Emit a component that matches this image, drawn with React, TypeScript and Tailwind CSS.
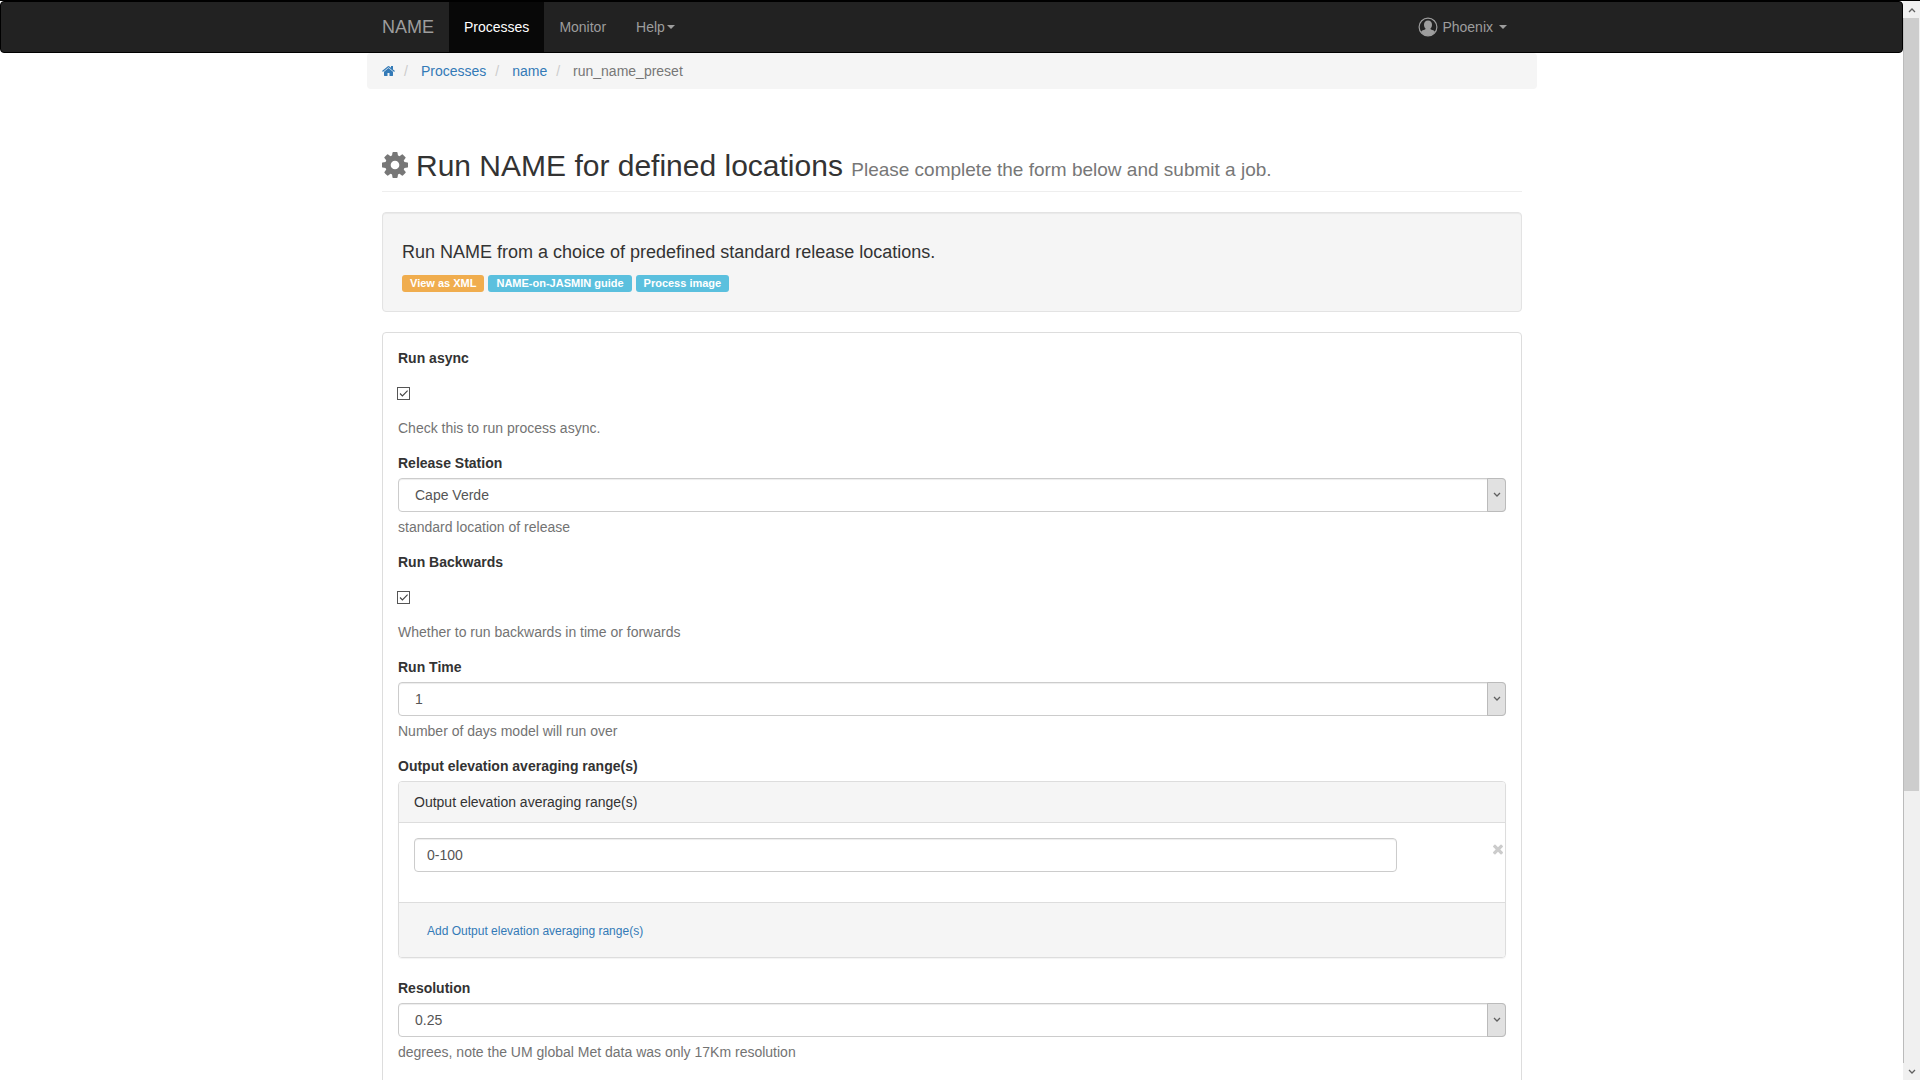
import { useState } from "react";
import type { ReactNode } from "react";

const COG =
  "M1152 896q0-106-75-181t-181-75-181 75-75 181 75 181 181 75 181-75 75-181zm512-109v222q0 12-8 23t-20 13l-185 28q-19 54-39 91 35 50 107 138 10 12 10 25t-9 23q-27 37-99 108t-94 71q-12 0-26-9l-138-108q-44 23-91 38-16 136-29 186-7 28-36 28h-222q-14 0-24.5-8.5t-11.5-21.5l-28-184q-49-16-90-37l-141 107q-10 9-25 9-14 0-25-11-126-114-165-168-7-10-7-23 0-12 8-23 15-21 51-66.5t54-70.5q-27-50-41-99l-183-27q-13-2-21-12.5t-8-23.5v-222q0-12 8-23t19-13l186-28q14-46 39-92-40-57-107-138-10-12-10-24 0-10 9-23 26-36 98.5-107.5t94.5-71.5q13 0 26 10l138 107q44-23 91-38 16-136 29-186 7-28 36-28h222q14 0 24.5 8.5t11.5 21.5l28 184q49 16 90 37l142-107q9-9 24-9 13 0 25 10 129 119 165 170 7 8 7 22 0 12-8 23-15 21-51 66.5t-54 70.5q26 50 41 98l183 28q13 2 21 12.5t8 23.5z";
const HOME =
  "M1472 992v480q0 26-19 45t-45 19h-384v-384h-256v384h-384q-26 0-45-19t-19-45v-480q0-1 .5-3t.5-3l575-474 575 474q1 2 1 6zm223-69l-62 74q-8 9-21 11h-3q-13 0-21-7l-692-577-692 577q-12 8-24 7-13-2-21-11l-62-74q-8-10-7-23.5t11-21.5l719-599q32-26 76-26t76 26l244 204v-195q0-14 9-23t23-9h192q14 0 23 9t9 23v408l219 182q10 8 11 21.5t-7 23.5z";
const TIMES =
  "M1490 1322q0 40-28 68l-136 136q-28 28-68 28t-68-28l-294-294-294 294q-28 28-68 28t-68-28l-136-136q-28-28-28-68t28-68l294-294-294-294q-28-28-28-68t28-68l136-136q28-28 68-28t68 28l294 294 294-294q28-28 68-28t68 28l136 136q28 28 28 68t-28 68l-294 294 294 294q28 28 28 68z";

function Caret() {
  return (
    <svg viewBox="0 0 8 4" className="h-1 w-2 fill-current" aria-hidden="true">
      <path d="M0 0h8L4 4z" />
    </svg>
  );
}

function Chevron({ up = false }: { up?: boolean }) {
  return (
    <svg viewBox="0 0 8 6" className="h-[6px] w-2 fill-none stroke-[#606060] stroke-[1.3]" aria-hidden="true">
      <path d={up ? "M1 5L4 2L7 5" : "M1 1L4 4L7 1"} />
    </svg>
  );
}

function Crumb({ children }: { children: ReactNode }) {
  return (
    <li className="flex">
      <span className="ml-[9px] mr-[13px] text-[#ccc]" aria-hidden="true">
        /
      </span>
      {children}
    </li>
  );
}

function Tag({ className, children }: { className: string; children: ReactNode }) {
  return (
    <a href="#" className={`rounded-[3px] px-2 text-[11px] leading-[17px] font-bold text-white ${className}`}>
      {children}
    </a>
  );
}

function CheckField({ id, label, help }: { id: string; label: string; help: string }) {
  const [on, setOn] = useState(true);
  return (
    <div className="mb-[15px]">
      <label htmlFor={id} className="block font-bold">
        {label}
      </label>
      <div className="-ml-px mt-[19px] mb-[18px] grid h-[13px] w-[13px]">
        <input
          id={id}
          type="checkbox"
          checked={on}
          onChange={() => setOn(!on)}
          className="peer col-start-1 row-start-1 h-[13px] w-[13px] appearance-none border border-[#555] bg-white"
        />
        <svg
          viewBox="0 0 13 13"
          className="pointer-events-none invisible col-start-1 row-start-1 h-[13px] w-[13px] fill-none stroke-[#444] stroke-[1.1] peer-checked:visible"
          aria-hidden="true"
        >
          <path d="M3 6.500L5.400 9L10.600 3.600" />
        </svg>
      </div>
      <p className="text-[#737373]">{help}</p>
    </div>
  );
}

function SelectField({ id, label, help, options }: { id: string; label: string; help: string; options: string[] }) {
  return (
    <div className="mb-[15px]">
      <label htmlFor={id} className="mb-[5px] block font-bold">
        {label}
      </label>
      <div className="relative">
        <select
          id={id}
          className="block h-[34px] w-full appearance-none rounded border border-[#ccc] bg-white pr-6 pl-4 text-[#555] shadow-[inset_0_1px_1px_rgba(0,0,0,0.075)]"
        >
          {options.map((o) => (
            <option key={o}>{o}</option>
          ))}
        </select>
        <span className="pointer-events-none absolute inset-y-0 right-0 flex w-[19px] items-center justify-center rounded-r border border-[#bbb] bg-[#e1e1e1]">
          <Chevron />
        </span>
      </div>
      <p className="mt-[5px] text-[#737373]">{help}</p>
    </div>
  );
}

function Navbar() {
  return (
    <nav className="rounded border border-black bg-[#222] pl-px text-[#9d9d9d]">
      <div className="mx-auto flex h-[50px] max-w-[1170px] items-stretch px-[15px]">
        <a href="#" className="flex items-center pr-[15px] text-lg">
          NAME
        </a>
        <a href="#" className="flex items-center bg-[#080808] px-[15px] text-white">
          Processes
        </a>
        <a href="#" className="flex items-center px-[15px]">
          Monitor
        </a>
        <button type="button" className="flex items-center gap-[2px] px-[15px]">
          Help
          <Caret />
        </button>
        <button type="button" className="ml-auto flex items-center px-[15px]">
          <svg viewBox="0 0 20 20" className="mr-1 h-5 w-5" aria-hidden="true">
            <circle cx="10" cy="10" r="8.9" className="fill-none stroke-current stroke-[1.2]" />
            <path
              className="fill-current"
              d="M10 3.600c2.600 0 4 1.700 4 4.100 0 1.600-.7 3.100-1.600 3.900 0 .5.1.8.6 1 1.700.5 3.200 1 3.900 2.200C15.400 17.300 13 18.800 10 18.800S4.600 17.300 3.100 14.800c.7-1.200 2.200-1.700 3.900-2.200.5-.2.600-.5.600-1C6.700 10.800 6 9.300 6 7.700c0-2.400 1.400-4.100 4-4.100z"
            />
          </svg>
          <span className="mr-[6px]">Phoenix</span>
          <Caret />
        </button>
      </div>
    </nav>
  );
}

function Scrollbar() {
  return (
    <div className="flex w-[17px] flex-none flex-col bg-[#f0f0f0]" aria-hidden="true">
      <div className="flex h-[17px] items-center justify-center">
        <Chevron up />
      </div>
      <div className="flex-1 border-l border-[#bbb] pr-px">
        <div className="h-[74%] bg-[#cdcdcd]" />
      </div>
      <div className="flex h-[17px] items-center justify-center">
        <Chevron />
      </div>
    </div>
  );
}

export default function App() {
  return (
    <div className="flex h-screen border-t border-black bg-white font-['Liberation_Sans',Arial,sans-serif] text-sm leading-5 text-[#333]">
      <div className="min-w-0 flex-1 overflow-hidden">
        <Navbar />
        <div className="pl-px">
          <div className="mx-auto max-w-[1170px]">
            <ol className="mb-[60px] flex rounded bg-[#f5f5f5] px-[15px] py-2 text-[#337ab7]">
              <li className="flex items-center">
                <a href="#" aria-label="Home">
                  <svg viewBox="64 128 1664 1536" className="h-3 w-[13px] fill-current" aria-hidden="true">
                    <path d={HOME} />
                  </svg>
                </a>
              </li>
              <Crumb>
                <a href="#">Processes</a>
              </Crumb>
              <Crumb>
                <a href="#">name</a>
              </Crumb>
              <Crumb>
                <span className="text-[#777]">run_name_preset</span>
              </Crumb>
            </ol>

            <main className="px-[15px]">
              <header className="mb-5 flex items-start border-b border-[#eee] pb-[9px]">
                <svg viewBox="128 128 1536 1536" className="mt-[3px] mr-2 h-[26px] w-[26px] fill-[#777]" aria-hidden="true">
                  <path d={COG} />
                </svg>
                <h2 className="text-[30px] leading-[33px]">
                  Run NAME for defined locations <small className="text-[19px] leading-5 text-[#777]">Please complete the form below and submit a job.</small>
                </h2>
              </header>

              <section className="mb-5 rounded border border-[#e3e3e3] bg-[#f5f5f5] p-[19px] shadow-[inset_0_1px_1px_rgba(0,0,0,0.05)]">
                <h4 className="my-[10px] text-lg leading-5">Run NAME from a choice of predefined standard release locations.</h4>
                <div className="flex h-5 items-end gap-1">
                  <Tag className="bg-[#f0ad4e]">View as XML</Tag>
                  <Tag className="bg-[#5bc0de]">NAME-on-JASMIN guide</Tag>
                  <Tag className="bg-[#5bc0de]">Process image</Tag>
                </div>
              </section>

              <form className="rounded border border-[#ddd] p-[15px]" onSubmit={(e) => e.preventDefault()}>
                <CheckField id="async" label="Run async" help="Check this to run process async." />
                <SelectField id="station" label="Release Station" help="standard location of release" options={["Cape Verde"]} />
                <CheckField id="backwards" label="Run Backwards" help="Whether to run backwards in time or forwards" />
                <SelectField id="runtime" label="Run Time" help="Number of days model will run over" options={["1"]} />

                <div className="mb-5">
                  <label htmlFor="elevation" className="mb-[5px] block font-bold">
                    Output elevation averaging range(s)
                  </label>
                  <div className="overflow-hidden rounded border border-[#ddd] shadow-[0_1px_1px_rgba(0,0,0,0.05)]">
                    <div className="border-b border-[#ddd] bg-[#f5f5f5] px-[15px] py-[10px]">Output elevation averaging range(s)</div>
                    <div className="flex items-start pt-[15px] pr-[2px] pb-[30px] pl-[15px]">
                      <input
                        id="elevation"
                        type="text"
                        defaultValue="0-100"
                        className="h-[34px] min-w-0 flex-1 rounded border border-[#ccc] bg-white px-3 text-[#555] shadow-[inset_0_1px_1px_rgba(0,0,0,0.075)]"
                      />
                      <button type="button" aria-label="Remove" className="mt-[6px] ml-24 text-[#ccc]">
                        <svg viewBox="302 302 1188 1188" className="h-[10px] w-[10px] overflow-visible fill-current" aria-hidden="true">
                          <path d={TIMES} />
                        </svg>
                      </button>
                    </div>
                    <div className="border-t border-[#ddd] bg-[#f5f5f5] px-[15px] py-[10px]">
                      <button type="button" className="block h-[34px] px-[13px] pt-[2px] text-xs text-[#337ab7]">
                        Add Output elevation averaging range(s)
                      </button>
                    </div>
                  </div>
                </div>

                <SelectField
                  id="resolution"
                  label="Resolution"
                  help="degrees, note the UM global Met data was only 17Km resolution"
                  options={["0.25"]}
                />
                <div className="h-10" />
              </form>
            </main>
          </div>
        </div>
      </div>
      <Scrollbar />
    </div>
  );
}
